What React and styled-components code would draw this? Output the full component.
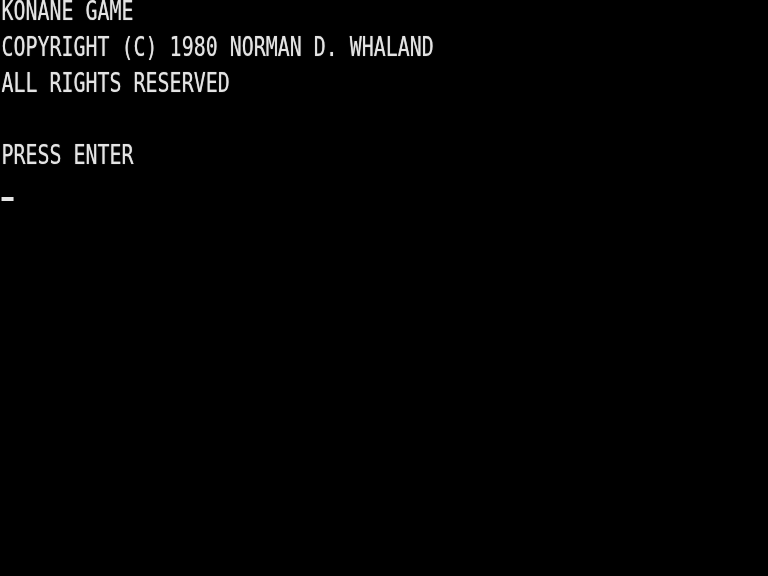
import React from "react";
import styled, { createGlobalStyle } from "styled-components";

const Global = createGlobalStyle`
  html, body { margin: 0; padding: 0; background: #000; overflow: hidden; }
  #root { width: 768px; height: 576px; background: #000; }
`;

const Screen = styled.div`
  width: 768px;
  height: 576px;
  background: #000;
  overflow: hidden;
`;

const Text = styled.div`
  width: 1001px;
  transform: scaleX(0.767);
  transform-origin: 0 0;
  font-family: "DejaVu Sans Mono", "Liberation Mono", monospace;
  font-size: 26px;
  color: #e4e4e4;
  text-shadow: 0 0 1px rgba(255,255,255,0.6);
  filter: blur(0.4px);
`;

const Line = styled.div`
  height: 36px;
  line-height: 22px;
  white-space: pre;
  padding-left: 2px;
`;

const CursorLine = styled.div`
  height: 36px;
  display: flex;
  align-items: flex-start;
  padding-left: 2px;
`;

const Cursor = styled.span`
  display: block;
  margin-top: 17px;
  width: 12px;
  height: 4px;
  background: #e4e4e4;
  transform: scaleX(1.304);
  transform-origin: 0 0;
`;

const lines = [
  "KONANE GAME",
  "COPYRIGHT (C) 1980 NORMAN D. WHALAND",
  "ALL RIGHTS RESERVED",
  "",
  "PRESS ENTER",
];

export default function App() {
  return (
    <Screen>
      <Global />
      <Text>
        {lines.map((l, i) => (
          <Line key={i}>{l}</Line>
        ))}
        <CursorLine>
          <Cursor />
        </CursorLine>
      </Text>
    </Screen>
  );
}
